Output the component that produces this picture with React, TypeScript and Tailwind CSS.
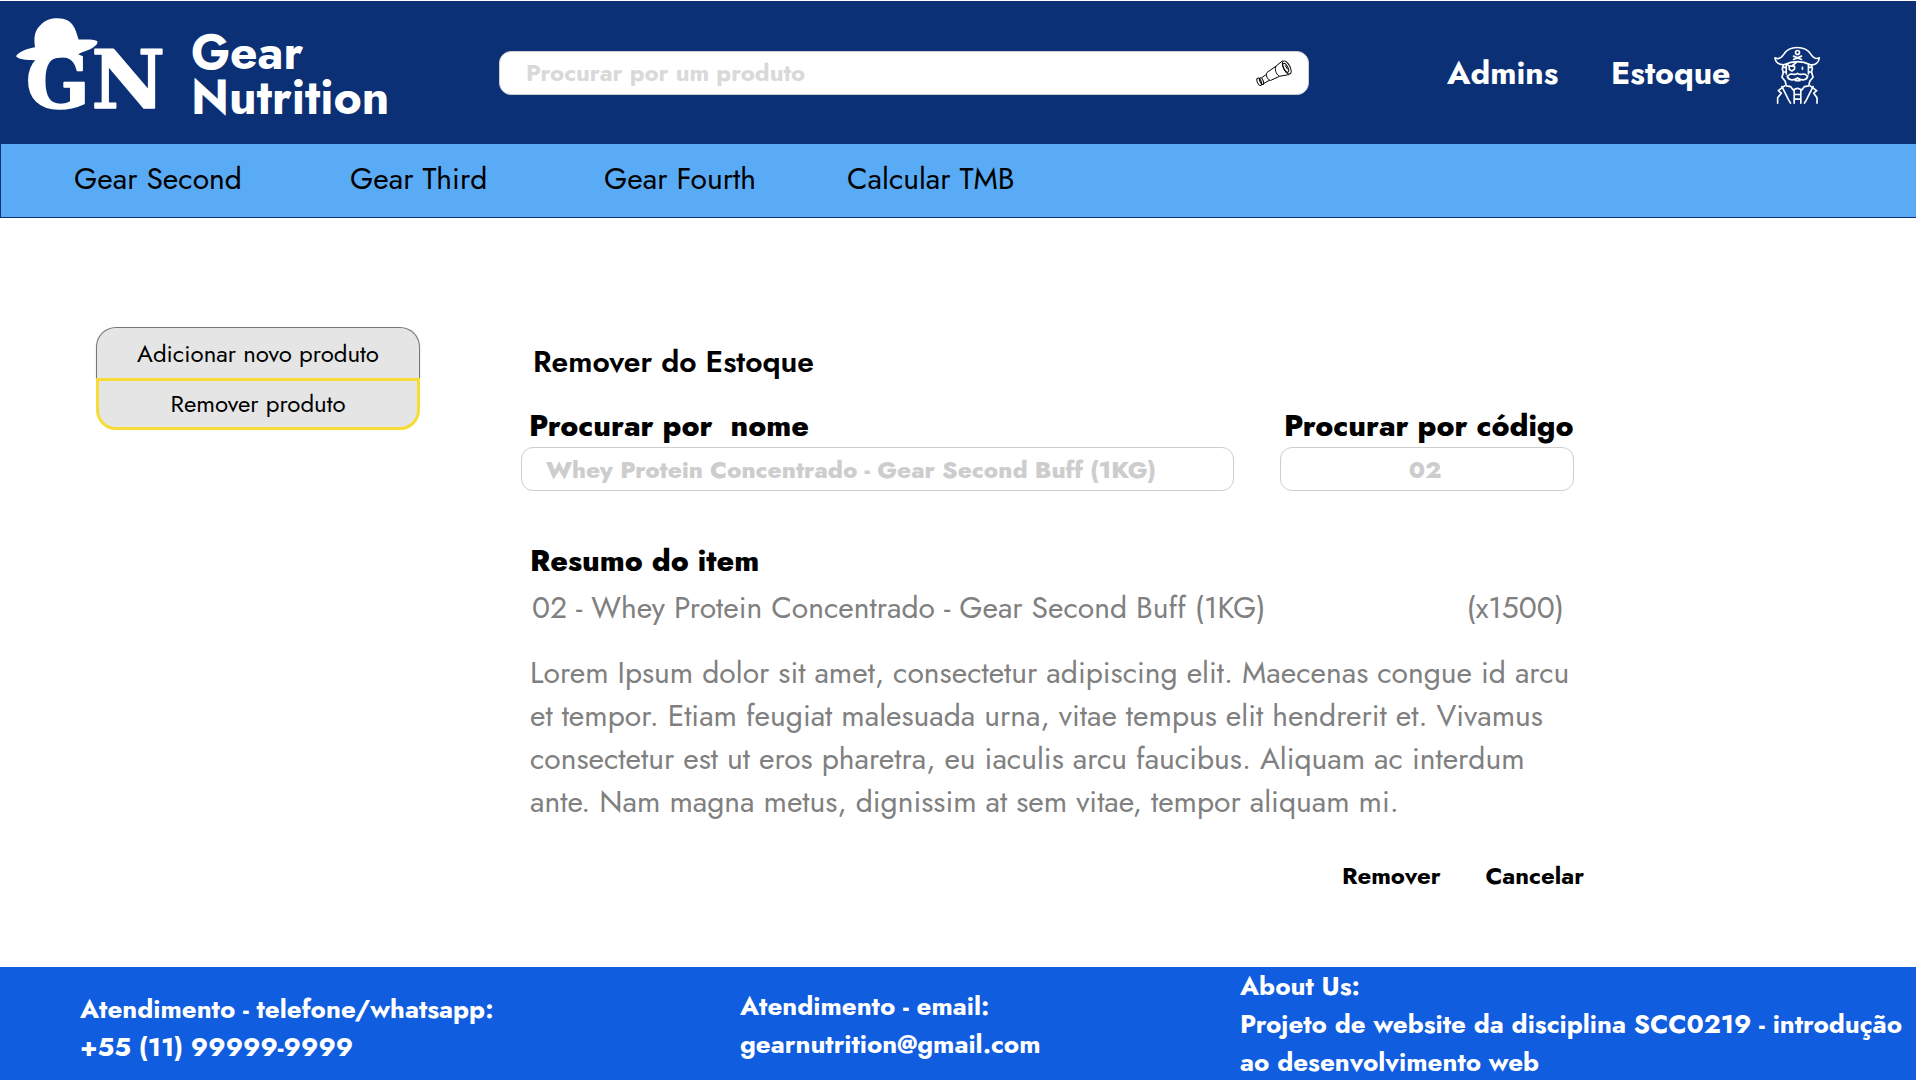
import type { ReactNode } from "react";

function HatLogo() {
  return (
    <svg viewBox="45 54 470 340" className="h-[113px] w-[157px] shrink-0 fill-white stroke-white" role="img" aria-label="GN">
      <path strokeWidth="0" d="M47 168C58 154 82 146 104 142C100 112 102 94 120 76C134 60 152 55 172 55C196 55 210 64 218 76C226 88 230 102 235 119C256 119 276 117 291 123C296 132 280 144 264 150C248 157 236 158 226 172C196 170 170 172 150 180C132 186 112 180 92 180C72 180 50 176 47 168Z" />
      <g fontFamily="'DejaVu Serif', serif" fontWeight="700" strokeWidth="5" strokeLinejoin="round">
        <text x="76" y="325" fontSize="226">G</text>
        <text x="274" y="325" fontSize="242">N</text>
      </g>
    </svg>
  );
}

function SpyglassIcon() {
  return (
    <svg viewBox="106 84 110 84" className="h-7 w-9 shrink-0 fill-none stroke-black" strokeWidth="3" strokeLinecap="round" strokeLinejoin="round" aria-hidden="true">
      <ellipse cx="200" cy="109" rx="10" ry="22" transform="rotate(-28 200 109)" />
      <ellipse cx="197" cy="110" rx="6" ry="15" transform="rotate(-28 197 110)" />
      <path d="M196 104L202 114M187 89L168 104C162 112 166 130 178 136L206 131M166 106L140 124C135 132 140 146 150 149L176 137M138 130L124 140M147 148L130 158" />
      <ellipse cx="116" cy="153" rx="6" ry="12" transform="rotate(-24 116 153)" />
      <ellipse cx="123" cy="151" rx="5" ry="11" transform="rotate(-24 123 151)" />
    </svg>
  );
}

function PirateIcon() {
  return (
    <svg viewBox="102 48 142 174" className="h-[58px] w-[47px] fill-none stroke-white" strokeWidth="5" strokeLinecap="round" strokeLinejoin="round" aria-hidden="true">
      <path d="M105 83C114 88 124 84 132 72C142 56 156 52 172 52C190 52 204 58 213 72C221 84 230 88 239 83C238 98 226 106 212 104C188 92 158 92 132 104C116 104 106 96 105 83Z" />
      <circle cx="173" cy="67" r="6" />
      <path d="M161 78L185 88M185 78L161 88" />
      <path d="M130 105L127 116L130 127M215 105L218 116L215 127M139 104V132M206 104V132M130 112H139M206 112H215M130 126H139M206 126H215M170 97L158 106M148 108H164V117L156 123L148 118ZM148 108L141 102M188 112V118" />
      <path d="M173 130C168 134 162 134 154 132C148 132 146 138 142 138C144 150 160 154 173 144C186 154 202 150 204 138C200 138 198 132 192 132C184 134 178 134 173 130ZM167 152H180" />
      <path d="M130 128L126 142L136 154L139 168L152 170L160 180L173 175L186 180L194 170L207 168L210 154L220 142L216 128" />
      <path d="M134 168L115 182L124 190L113 204V220M211 168L231 182L222 190L232 204V220M126 170L146 210L152 220M220 170L200 210L194 220M163 180V220M183 180V220M163 194H183M163 208H183" />
    </svg>
  );
}

function FooterBlock({ children }: { children: ReactNode }) {
  return <div className="leading-[38px]">{children}</div>;
}

export default function App() {
  return (
    <div className="flex min-h-screen flex-col bg-white pt-px font-['Jost','Lato',sans-serif] text-black">
      <header className="flex h-[143px] items-center bg-[#0b3075] text-white">
        <a href="#inicio" className="flex h-full w-[499px] shrink-0 items-start gap-[19px] pt-[17px] pl-[15px]">
          <HatLogo />
          <span className="flex flex-col pt-3 text-5xl leading-[45px] font-bold">
            <span>Gear</span>
            <span>Nutrition</span>
          </span>
        </a>
        <form className="flex h-11 flex-1 items-center rounded-xl border border-[#cdcdcd] bg-white pr-4 pl-[26px]">
          <input
            type="search"
            aria-label="Procurar por um produto"
            placeholder="Procurar por um produto"
            className="min-w-0 flex-1 text-2xl font-bold text-black outline-none placeholder:text-[#d9d9d9]"
          />
          <button type="button" aria-label="Procurar">
            <SpyglassIcon />
          </button>
        </form>
        <nav className="flex w-[607px] shrink-0 items-center pl-[138px] text-[32px] font-bold">
          <a href="#admins" className="w-[164px]">Admins</a>
          <a href="#estoque" className="w-[163px]">Estoque</a>
          <a href="#perfil" aria-label="Perfil" className="pt-1">
            <PirateIcon />
          </a>
        </nav>
      </header>

      <nav className="grid h-[74px] grid-cols-[276px_254px_243px_auto] items-center border border-t-0 border-r-0 border-[#0b3075] bg-[#59abf5] pb-[3px] pl-[73px] text-3xl">
        <a href="#second">Gear Second</a>
        <a href="#third">Gear Third</a>
        <a href="#fourth">Gear Fourth</a>
        <a href="#tmb">Calcular TMB</a>
      </nav>

      <main className="flex flex-1 items-start pt-[109px] pl-24">
        <div className="flex w-[324px] shrink-0 flex-col text-2xl">
          <button type="button" className="h-[51px] rounded-t-[20px] border border-b-0 border-[#777777] bg-[#e5e5e5] pt-0.5 shadow-sm">
            Adicionar novo produto
          </button>
          <button type="button" className="z-10 h-[52px] rounded-b-[20px] border-3 border-[#f7dc35] bg-[#e5e5e5]">
            Remover produto
          </button>
        </div>

        <section className="ml-[101px] w-[1063px] pt-[17px]">
          <h1 className="pl-3 text-3xl font-semibold">Remover do Estoque</h1>
          <div className="mt-[25px] flex gap-[46px]">
            <label className="w-[713px] text-3xl leading-[42px] font-extrabold">
              <span className="block pl-2 whitespace-pre">Procurar por  nome</span>
              <input
                type="text"
                placeholder="Whey Protein Concentrado - Gear Second Buff (1KG)"
                className="block h-11 w-full rounded-xl border border-[#cdcdcd] px-6 text-2xl outline-none placeholder:text-[#cdcdcd]"
              />
            </label>
            <label className="w-[294px] text-3xl leading-[42px] font-extrabold">
              <span className="block pl-1 whitespace-nowrap">Procurar por código</span>
              <input
                type="text"
                placeholder="02"
                className="block h-11 w-full rounded-xl border border-[#cdcdcd] pr-7 pl-6 text-center text-2xl outline-none placeholder:text-[#cdcdcd]"
              />
            </label>
          </div>
          <h2 className="mt-12 pl-[9px] text-3xl leading-[43px] font-extrabold">Resumo do item</h2>
          <div className="flex justify-between pt-1 pr-5 pl-[11px] text-3xl leading-[43px] text-[#808080]">
            <p>02 - Whey Protein Concentrado - Gear Second Buff (1KG)</p>
            <p>(x1500)</p>
          </div>
          <p className="mt-[22px] pl-[9px] text-3xl leading-[43px] text-[#808080]">
            Lorem Ipsum dolor sit amet, consectetur adipiscing elit. Maecenas congue id arcu et tempor. Etiam feugiat
            malesuada urna, vitae tempus elit hendrerit et. Vivamus consectetur est ut eros pharetra, eu iaculis arcu
            faucibus. Aliquam ac interdum ante. Nam magna metus, dignissim at sem vitae, tempor aliquam mi.
          </p>
          <div className="mt-[37px] flex justify-end gap-[45px] text-2xl font-bold">
            <button type="button">Remover</button>
            <button type="button">Cancelar</button>
          </div>
        </section>
      </main>

      <footer className="grid h-[113px] grid-cols-[660px_500px_1fr] items-center bg-[#115ddf] pl-20 text-[26px] font-bold text-white">
        <div className="pt-1.5">
          <FooterBlock>
            <p>Atendimento - telefone/whatsapp:</p>
            <p>+55 (11) 99999-9999</p>
          </FooterBlock>
        </div>
        <FooterBlock>
          <p>Atendimento - email:</p>
          <a href="mailto:gearnutrition@gmail.com">gearnutrition@gmail.com</a>
        </FooterBlock>
        <div className="pb-0.5">
          <FooterBlock>
            <p>About Us:</p>
            <p>Projeto de website da disciplina SCC0219 - introdução ao desenvolvimento web</p>
          </FooterBlock>
        </div>
      </footer>
    </div>
  );
}
